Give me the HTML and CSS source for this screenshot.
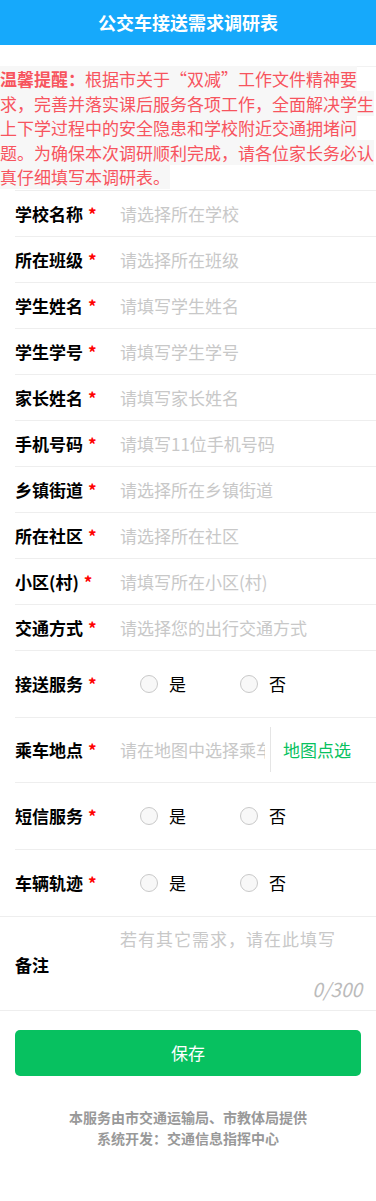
FILE: index.html
```html
<!DOCTYPE html>
<html lang="zh-CN">
<head>
  <meta charset="UTF-8" />
  <meta name="viewport" content="width=device-width, initial-scale=1.0" />
  <title>公交车接送需求调研表</title>
  <link rel="stylesheet" href="styles.css">
</head>
<body>
  <div class="header">公交车接送需求调研表</div>

  <div class="notice">
    <span class="notice-text"><b>温馨提醒：</b>根据市关于“双减”工作文件精神要求，完善并落实课后服务各项工作，全面解决学生上下学过程中的安全隐患和学校附近交通拥堵问题。为确保本次调研顺利完成，请各位家长务必认真仔细填写本调研表。</span>
  </div>

  <form class="form">
    <div class="row">
      <label class="label">学校名称<i>*</i></label>
      <input class="field" type="text" placeholder="请选择所在学校" readonly />
    </div>
    <div class="row">
      <label class="label">所在班级<i>*</i></label>
      <input class="field" type="text" placeholder="请选择所在班级" readonly />
    </div>
    <div class="row">
      <label class="label">学生姓名<i>*</i></label>
      <input class="field" type="text" placeholder="请填写学生姓名" />
    </div>
    <div class="row">
      <label class="label">学生学号<i>*</i></label>
      <input class="field" type="text" placeholder="请填写学生学号" />
    </div>
    <div class="row">
      <label class="label">家长姓名<i>*</i></label>
      <input class="field" type="text" placeholder="请填写家长姓名" />
    </div>
    <div class="row">
      <label class="label">手机号码<i>*</i></label>
      <input class="field" type="tel" placeholder="请填写11位手机号码" />
    </div>
    <div class="row">
      <label class="label">乡镇街道<i>*</i></label>
      <input class="field" type="text" placeholder="请选择所在乡镇街道" readonly />
    </div>
    <div class="row">
      <label class="label">所在社区<i>*</i></label>
      <input class="field" type="text" placeholder="请选择所在社区" readonly />
    </div>
    <div class="row">
      <label class="label">小区(村)<i>*</i></label>
      <input class="field" type="text" placeholder="请填写所在小区(村)" />
    </div>
    <div class="row">
      <label class="label">交通方式<i>*</i></label>
      <input class="field" type="text" placeholder="请选择您的出行交通方式" readonly />
    </div>

    <div class="row row-tall">
      <label class="label">接送服务<i>*</i></label>
      <div class="radios">
        <span class="radio"><span class="dot"></span>是</span>
        <span class="radio"><span class="dot"></span>否</span>
      </div>
    </div>

    <div class="row row-map">
      <label class="label">乘车地点<i>*</i></label>
      <input class="field field-map" type="text" placeholder="请在地图中选择乘车地点" readonly />
      <span class="map-btn">地图点选</span>
    </div>

    <div class="row row-tall">
      <label class="label">短信服务<i>*</i></label>
      <div class="radios">
        <span class="radio"><span class="dot"></span>是</span>
        <span class="radio"><span class="dot"></span>否</span>
      </div>
    </div>

    <div class="row row-tall">
      <label class="label">车辆轨迹<i>*</i></label>
      <div class="radios">
        <span class="radio"><span class="dot"></span>是</span>
        <span class="radio"><span class="dot"></span>否</span>
      </div>
    </div>

    <div class="row row-note">
      <label class="label">备注</label>
      <div class="note">
        <textarea class="note-input" placeholder="若有其它需求，请在此填写"></textarea>
        <div class="count">0/300</div>
      </div>
    </div>
  </form>

  <button class="save-btn" type="button">保存</button>

  <div class="footer">
    <p>本服务由市交通运输局、市教体局提供</p>
    <p>系统开发：交通信息指挥中心</p>
  </div>
</body>
</html>
```

FILE: styles.css
```css
body {
  margin: 0;
  font-family: "Noto Sans CJK SC", "Noto Sans", Arial, sans-serif;
  background: #fff;
  color: #000;
}

.header {
  height: 45px;
  line-height: 45px;
  background: #16a9fb;
  color: #fff;
  font-size: 18px;
  font-weight: bold;
  text-align: center;
}

.notice {
  margin-top: 21px;
  border-top: 1px solid #f2f2f2;
  font-size: 17px;
  line-height: 24.6px;
  color: #f7545e;
}

.notice-text {
  background: #f7f7f7;
}

.form {
  margin: 0;
}

.row {
  display: flex;
  align-items: center;
  height: 45px;
  margin-left: 15px;
  border-top: 1px solid #eeeeee;
}

.label {
  width: 105px;
  flex-shrink: 0;
  font-size: 17px;
  font-weight: bold;
}

.label i {
  font-style: normal;
  color: #f00;
  margin-left: 5px;
}

.field {
  flex: 1;
  min-width: 0;
  border: none;
  outline: none;
  padding: 0;
  font-family: inherit;
  font-size: 17px;
  color: #333;
  background: transparent;
}

.field::placeholder {
  color: #c8c8c8;
}

.row-tall {
  height: 66px;
}

.radios {
  display: flex;
  padding-left: 20px;
}

.radio {
  display: flex;
  align-items: center;
  width: 100px;
  font-size: 17px;
}

.dot {
  width: 16px;
  height: 16px;
  border: 1px solid #c9c9c9;
  border-radius: 50%;
  background: #f8f8f8;
  margin-right: 11px;
}

.row-map {
  height: 64px;
}

.field-map {
  flex: 0 0 145px;
  margin-right: 5px;
}

.map-btn {
  height: 45px;
  line-height: 45px;
  padding-left: 12px;
  border-left: 1px solid #e5e5e5;
  color: #07c160;
  font-size: 17px;
}

.row-note {
  height: 93px;
  border-bottom: 1px solid #eeeeee;
  margin-left: 0;
  padding-left: 15px;
}

.row-note .label {
  padding-top: 2px;
}

.note {
  flex: 1;
  align-self: stretch;
  display: flex;
  flex-direction: column;
  padding: 11px 14px 0 0;
}

.note-input {
  flex: 1;
  border: none;
  outline: none;
  resize: none;
  padding: 0;
  font-family: inherit;
  font-size: 17px;
  letter-spacing: 1px;
  line-height: 22px;
}

.note-input::placeholder {
  color: #c8c8c8;
}

.count {
  text-align: right;
  font-size: 19px;
  font-style: italic;
  color: #bbb;
  padding-bottom: 9px;
  line-height: 24px;
}

.save-btn {
  display: block;
  width: 346px;
  height: 46px;
  margin: 19px 15px 0;
  border: none;
  border-radius: 5px;
  background: #07c160;
  color: #fff;
  font-family: inherit;
  font-size: 17px;
}

.footer {
  margin-top: 31px;
  text-align: center;
  font-size: 14px;
  font-weight: bold;
  color: #999;
  line-height: 21px;
}

.footer p {
  margin: 0;
}
```
